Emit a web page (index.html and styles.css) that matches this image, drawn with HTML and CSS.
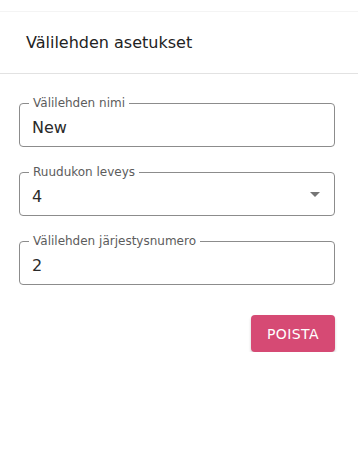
FILE: index.html
```html
<!DOCTYPE html>
<html lang="fi">
<head>
  <meta charset="UTF-8">
  <meta name="viewport" content="width=device-width, initial-scale=1.0">
  <title>Välilehden asetukset</title>
  <link rel="stylesheet" href="styles.css">
</head>
<body>

  <div class="dialog">
    <div class="header">
      <h2>Välilehden asetukset</h2>
    </div>

    <div class="content">
      <fieldset class="field">
        <legend>Välilehden nimi</legend>
        <input type="text" value="New">
      </fieldset>

      <fieldset class="field select">
        <legend>Ruudukon leveys</legend>
        <div class="value">4</div>
        <span class="arrow"></span>
      </fieldset>

      <fieldset class="field">
        <legend>Välilehden järjestysnumero</legend>
        <input type="number" value="2">
      </fieldset>

      <div class="actions">
        <button>Poista</button>
      </div>
    </div>
  </div>

</body>
</html>
```

FILE: styles.css
```css
body {
  font-family: 'DejaVu Sans', sans-serif;
  background-color: #fff;
  margin: 0;
}
.dialog {
  margin-top: 11px;
  border-top: 1px solid #f4f4f4;
}
.header {
  height: 61px;
  padding: 0 26px;
  display: flex;
  align-items: center;
  border-bottom: 1px solid #e2e2e2;
}
h2 {
  margin: 0;
  font-size: 16px;
  font-weight: 500;
  color: #222;
}
.content {
  padding: 22px 23px 0 19px;
}
.field {
  margin: 0 0 18px 0;
  padding: 0 12px 0 9px;
  border: 1px solid #8c8c8c;
  border-radius: 4px;
  display: flex;
  align-items: center;
}
legend {
  padding: 0 4px;
  font-size: 12px;
  line-height: 14px;
  color: #5c5c5c;
}
input, .value {
  flex: 1;
  border: none;
  outline: none;
  padding: 8px 3px;
  margin: 0;
  font-family: inherit;
  font-size: 16px;
  line-height: 20px;
  color: #2a2a2a;
  background: none;
  min-width: 0;
}
input[type="number"] {
  -moz-appearance: textfield;
}
input::-webkit-inner-spin-button {
  -webkit-appearance: none;
}
.arrow {
  width: 0;
  height: 0;
  border-left: 5px solid transparent;
  border-right: 5px solid transparent;
  border-top: 5px solid #757575;
  margin-right: 2px;
  margin-top: -6px;
}
.actions {
  display: flex;
  justify-content: flex-end;
  margin-top: 30px;
}
button {
  width: 84px;
  height: 37px;
  border: none;
  border-radius: 4px;
  background-color: #d64a74;
  color: #fff;
  font-family: inherit;
  font-size: 14px;
  text-transform: uppercase;
  letter-spacing: 0.4px;
  box-shadow: 0 2px 3px rgba(0,0,0,0.2);
  cursor: pointer;
}
```
